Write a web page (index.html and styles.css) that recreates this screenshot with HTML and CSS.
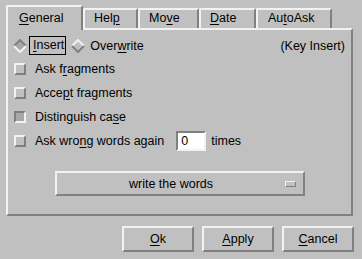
FILE: index.html
```html
<!DOCTYPE html>
<html lang="en">
<head>
    <meta charset="UTF-8">
    <title>Options</title>
    <link rel="stylesheet" href="styles.css">
</head>
<body>
    <div class="dialog">
        <!-- Tab bar -->
        <div class="tabs">
            <div class="tab active"><u>G</u>eneral</div>
            <div class="tab tab-help">Hel<u>p</u></div>
            <div class="tab tab-move">Mo<u>v</u>e</div>
            <div class="tab tab-date"><u>D</u>ate</div>
            <div class="tab tab-autoask">Au<u>t</u>oAsk</div>
        </div>

        <!-- Tab page -->
        <div class="panel">
            <div class="radio-row">
                <svg class="diamond" width="14" height="14" viewBox="0 0 14 14">
                    <polygon points="7,1 13,7 7,13 1,7" fill="#a8a8a8"/>
                    <polyline points="1,7 7,1 13,7" fill="none" stroke="#808080" stroke-width="2"/>
                    <polyline points="1,7 7,13 13,7" fill="none" stroke="#f2f2f2" stroke-width="2"/>
                </svg>
                <span class="focus"><u>I</u>nsert</span>
                <svg class="diamond diamond-off" width="14" height="14" viewBox="0 0 14 14">
                    <polygon points="7,1 13,7 7,13 1,7" fill="#c0c0c0"/>
                    <polyline points="1,7 7,1 13,7" fill="none" stroke="#f2f2f2" stroke-width="2"/>
                    <polyline points="1,7 7,13 13,7" fill="none" stroke="#808080" stroke-width="2"/>
                </svg>
                <span class="radio-label">Over<u>w</u>rite</span>
                <span class="key-hint">(Key Insert)</span>
            </div>

            <div class="check-row">
                <span class="check"></span>
                <span>Ask f<u>r</u>agments</span>
            </div>
            <div class="check-row">
                <span class="check"></span>
                <span>Acce<u>p</u>t fragments</span>
            </div>
            <div class="check-row">
                <span class="check checked"></span>
                <span>Distinguish ca<u>s</u>e</span>
            </div>
            <div class="check-row">
                <span class="check"></span>
                <span>Ask wro<u>n</u>g words again</span>
                <span class="number-field">0</span>
                <span class="after-field">times</span>
            </div>

            <div class="menu-button">
                <span class="menu-text">write the words</span>
                <span class="menu-mark"></span>
            </div>
        </div>

        <!-- Dialog buttons -->
        <div class="buttons">
            <div class="button"><u>O</u>k</div>
            <div class="button"><u>A</u>pply</div>
            <div class="button"><u>C</u>ancel</div>
        </div>
    </div>
</body>
</html>
```

FILE: styles.css
```css
body {
    margin: 0;
    background-color: #c0c0c0;
    font-family: "Liberation Sans", Arial, sans-serif;
    font-size: 12.5px;
    color: #000;
}
u {
    text-decoration: underline;
    text-underline-offset: 2px;
}
.dialog {
    padding: 5px 9px 0 6px;
}
/* Tabs */
.tabs {
    display: flex;
    align-items: flex-end;
    height: 23px;
}
.tab {
    box-sizing: border-box;
    height: 20px;
    border-top: 2px solid #f2f2f2;
    border-left: 2px solid #f2f2f2;
    border-right: 2px solid #808080;
    border-radius: 2px 2px 0 0;
    padding-left: 9px;
    line-height: 17px;
    white-space: nowrap;
}
.tab.active {
    position: relative;
    z-index: 1;
    width: 77px;
    height: 25px;
    margin-bottom: -2px;
    padding-left: 11px;
    padding-top: 3px;
    background-color: #c0c0c0;
}
.tab-help { width: 55px; }
.tab-move { width: 61px; }
.tab-date { width: 57px; }
.tab-autoask { width: 76px; padding-left: 10px; }
/* Page */
.panel {
    box-sizing: border-box;
    height: 188px;
    border: 2px solid;
    border-color: #f2f2f2 #808080 #808080 #f2f2f2;
    padding: 4px 6px 0 5px;
}
.radio-row {
    display: flex;
    align-items: center;
    height: 23px;
}
.diamond {
    display: block;
    flex: none;
}
.focus {
    box-sizing: border-box;
    height: 19px;
    line-height: 17px;
    margin-left: 2px;
    padding: 0 1px 0 3px;
    border: 1px solid #000;
}
.diamond-off {
    margin-left: 5px;
}
.radio-label {
    margin-left: 5px;
}
.key-hint {
    margin-left: auto;
}
.check-row {
    display: flex;
    align-items: center;
    height: 24px;
}
.check {
    box-sizing: border-box;
    width: 12px;
    height: 12px;
    margin: 0 9px 0 1px;
    border: 2px solid;
    border-color: #f2f2f2 #808080 #808080 #f2f2f2;
}
.check.checked {
    border-color: #808080 #f2f2f2 #f2f2f2 #808080;
    background-color: #a8a8a8;
}
.number-field {
    box-sizing: border-box;
    width: 30px;
    height: 20px;
    margin-left: 12px;
    padding-left: 3px;
    line-height: 16px;
    border: 2px solid;
    border-color: #808080 #f2f2f2 #f2f2f2 #808080;
    background-color: #fff;
}
.after-field {
    margin-left: 5px;
}
/* Option menu */
.menu-button {
    box-sizing: border-box;
    display: flex;
    align-items: center;
    width: 250px;
    height: 25px;
    margin: 18px 0 0 42px;
    border: 2px solid;
    border-color: #f2f2f2 #808080 #808080 #f2f2f2;
}
.menu-text {
    flex: 1;
    text-align: center;
}
.menu-mark {
    box-sizing: border-box;
    width: 11px;
    height: 6px;
    margin-right: 7px;
    border: 1px solid;
    border-color: #f2f2f2 #808080 #808080 #f2f2f2;
}
/* Dialog buttons */
.buttons {
    display: flex;
    justify-content: flex-end;
    gap: 8px;
    margin: 10px -1px 0 0;
}
.button {
    box-sizing: border-box;
    width: 72px;
    height: 26px;
    line-height: 22px;
    text-align: center;
    border: 2px solid;
    border-color: #f2f2f2 #808080 #808080 #f2f2f2;
}
```
